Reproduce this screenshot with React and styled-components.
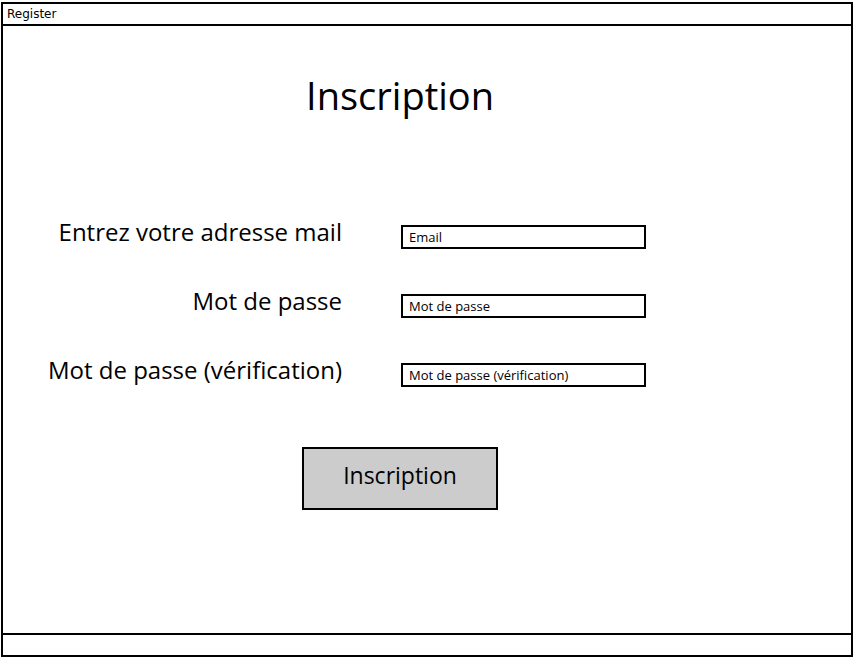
import React from 'react'
import styled, { createGlobalStyle } from 'styled-components'

const GlobalStyle = createGlobalStyle`
  html, body {
    margin: 0;
    padding: 0;
    background: #ffffff;
  }
  * {
    box-sizing: border-box;
  }
`

const Window = styled.div`
  display: flex;
  flex-direction: column;
  width: 852px;
  height: 655px;
  margin: 2px 3px 2px 1px;
  border: 2px solid #000;
  background: #fff;
  font-family: "Open Sans", "Noto Sans", sans-serif;
  color: #000;
`

const TitleBar = styled.div`
  display: flex;
  align-items: center;
  height: 22px;
  padding-left: 4px;
  border-bottom: 2px solid #000;
  font-family: "DejaVu Sans", "Liberation Sans", sans-serif;
  font-size: 12px;
`

const StatusBar = styled.div`
  height: 22px;
  border-top: 2px solid #000;
`

const Content = styled.main`
  flex: 1;
  display: flex;
  flex-direction: column;
  align-items: center;
  width: 794px;
`

const Heading = styled.h1`
  margin: 47px 0 0;
  font-size: 38px;
  line-height: 44px;
  font-weight: 400;
`

const Form = styled.form`
  align-self: flex-start;
  display: grid;
  grid-template-columns: 339px 245px;
  grid-auto-rows: 24px;
  column-gap: 59px;
  row-gap: 45px;
  margin-top: 108px;
`

const Label = styled.label`
  align-self: start;
  text-align: right;
  font-size: 24px;
  line-height: 14px;
  white-space: nowrap;
`

const Field = styled.input`
  width: 245px;
  height: 24px;
  padding: 0 6px;
  border: 2px solid #000;
  border-radius: 0;
  outline: none;
  font-family: inherit;
  font-size: 13px;
  color: #000;

  &::placeholder {
    color: #000;
    opacity: 1;
  }
`

const Button = styled.button`
  width: 196px;
  height: 63px;
  margin-top: 60px;
  border: 2px solid #000;
  background: #cccccc;
  font-family: inherit;
  font-size: 23px;
  color: #000;
  padding-bottom: 8px;
`

const fields = [
  { id: 'email', label: 'Entrez votre adresse mail', placeholder: 'Email' },
  { id: 'password', label: 'Mot de passe', placeholder: 'Mot de passe' },
  { id: 'confirm', label: 'Mot de passe (vérification)', placeholder: 'Mot de passe (vérification)' },
]

export default function App() {
  return (
    <>
      <GlobalStyle />
      <Window>
        <TitleBar>Register</TitleBar>
        <Content>
          <Heading>Inscription</Heading>
          <Form onSubmit={e => e.preventDefault()}>
            {fields.map(f => (
              <React.Fragment key={f.id}>
                <Label htmlFor={f.id}>{f.label}</Label>
                <Field id={f.id} type="text" placeholder={f.placeholder} />
              </React.Fragment>
            ))}
          </Form>
          <Button type="button">Inscription</Button>
        </Content>
        <StatusBar />
      </Window>
    </>
  )
}
